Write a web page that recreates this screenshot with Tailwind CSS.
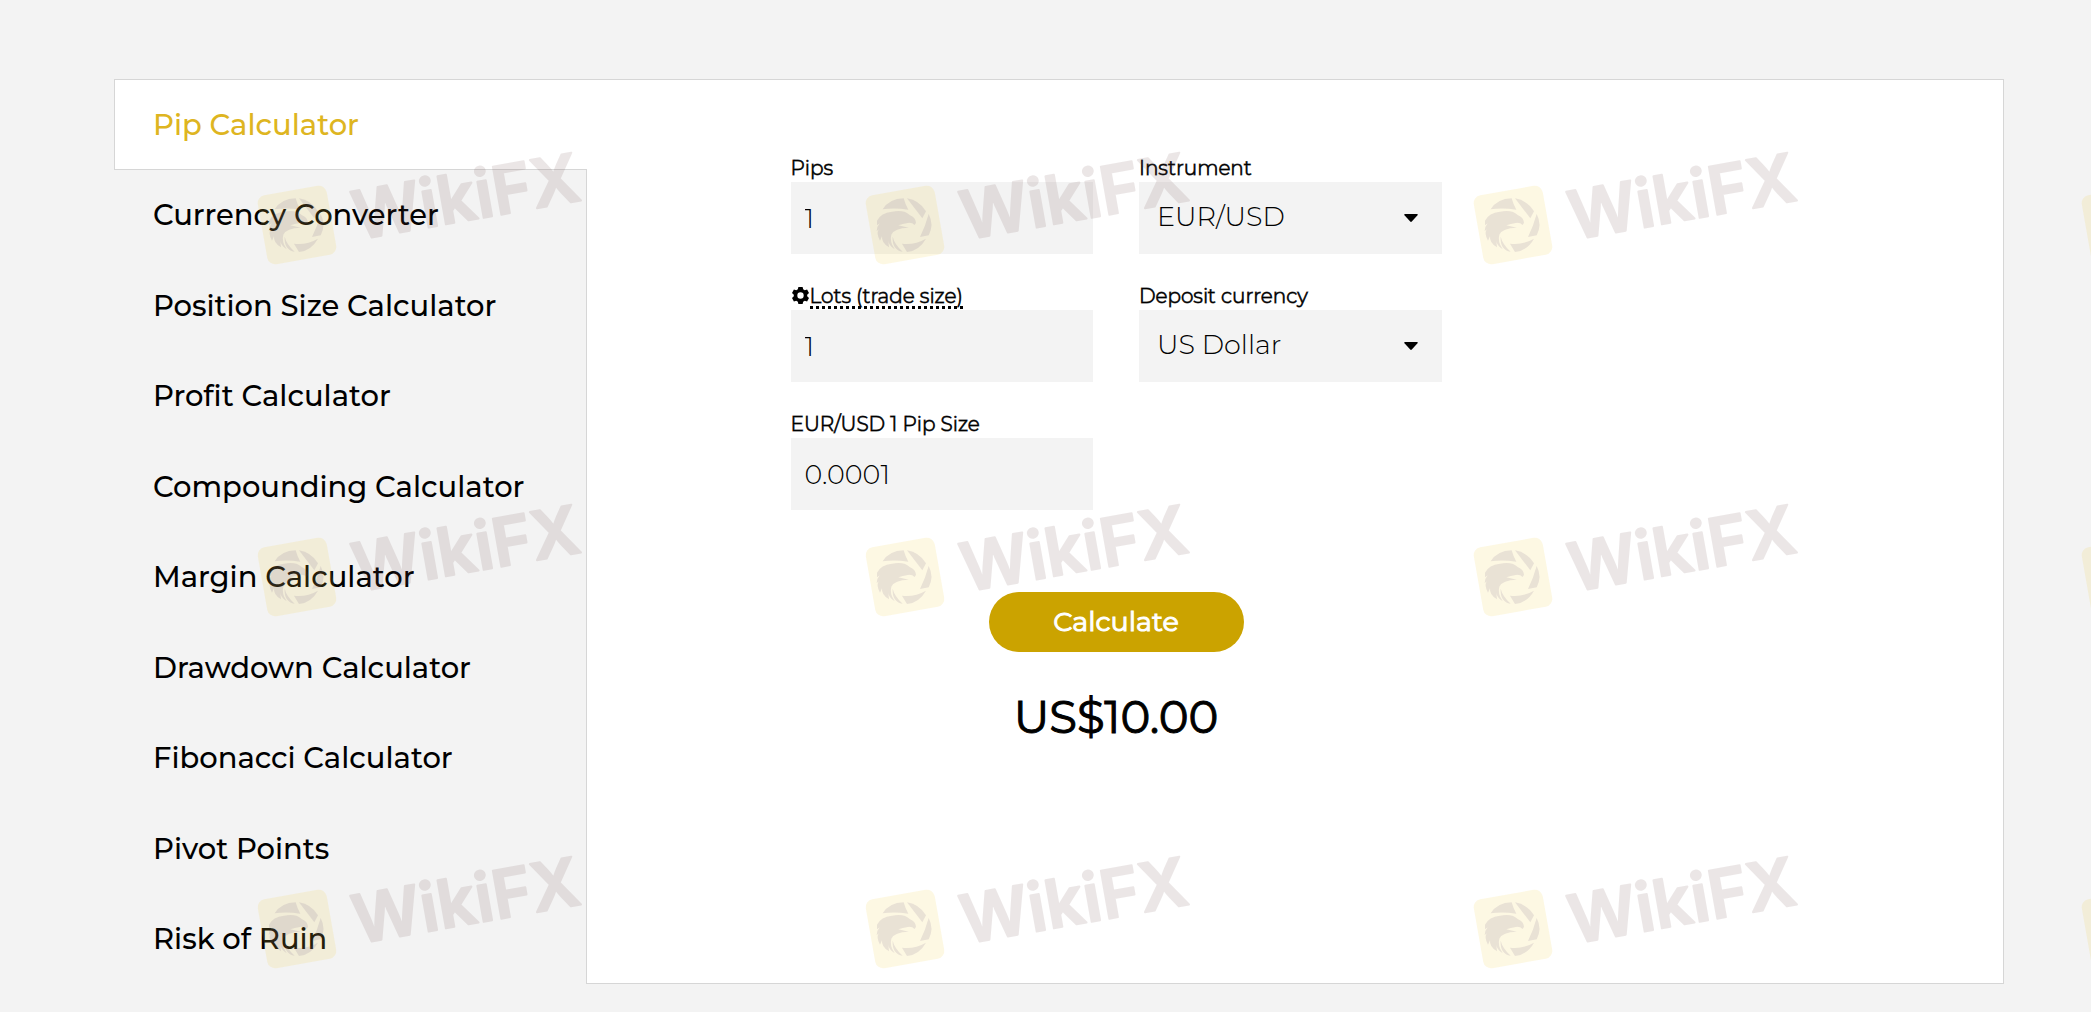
<!DOCTYPE html>
<html lang="en">
<head>
    <meta charset="UTF-8">
    <meta name="viewport" content="width=device-width, initial-scale=1.0">
    <title>Pip Calculator</title>
    <script src="https://cdn.jsdelivr.net/npm/@tailwindcss/browser@4"></script>
</head>
<body class="relative min-h-screen overflow-x-hidden bg-[#f3f3f3] font-[Montserrat,Inter,sans-serif] text-black">

<div class="flex min-h-[984px] pt-[79px] pr-[87px] pl-[114px]">
    <!-- Sidebar -->
    <nav class="z-10 -mr-px grid w-1/4 shrink-0 auto-rows-fr text-[29px] font-medium">
        <a href="#pip" class="flex items-center border border-r-0 border-[#d6d6d6] bg-white pl-[38px] text-[#deb521]">Pip Calculator</a>
        <a href="#converter" class="flex items-center border-r border-[#d6d6d6] pl-[39px]">Currency Converter</a>
        <a href="#position" class="flex items-center border-r border-[#d6d6d6] pl-[39px]">Position Size Calculator</a>
        <a href="#profit" class="flex items-center border-r border-[#d6d6d6] pl-[39px]">Profit Calculator</a>
        <a href="#compounding" class="flex items-center border-r border-[#d6d6d6] pl-[39px]">Compounding Calculator</a>
        <a href="#margin" class="flex items-center border-r border-[#d6d6d6] pl-[39px]">Margin Calculator</a>
        <a href="#drawdown" class="flex items-center border-r border-[#d6d6d6] pl-[39px]">Drawdown Calculator</a>
        <a href="#fibonacci" class="flex items-center border-r border-[#d6d6d6] pl-[39px]">Fibonacci Calculator</a>
        <a href="#pivot" class="flex items-center border-r border-[#d6d6d6] pl-[39px]">Pivot Points</a>
        <a href="#ruin" class="flex items-center border-r border-[#d6d6d6] pl-[39px]">Risk of Ruin</a>
    </nav>

    <!-- Calculator -->
    <main class="grow border border-l-0 border-[#d6d6d6] bg-white pt-[76px] pl-[205px]">
        <form class="max-w-[651px]" onsubmit="return false">
            <div class="grid grid-cols-2 gap-x-[46px] gap-y-[30px]">
                <div>
                    <label for="pips" class="flex h-[26px] items-start text-[20px] leading-6 font-light [-webkit-text-stroke:1px_#000b]">Pips</label>
                    <input id="pips" type="text" value="1" class="block h-[72px] w-full bg-[#f3f3f3] px-[14px] text-[27px] font-light">
                </div>
                <div>
                    <label for="instrument" class="flex h-[26px] items-start text-[20px] leading-6 font-light [-webkit-text-stroke:1px_#000b]">Instrument</label>
                    <div class="relative">
                        <select id="instrument" class="block h-[72px] w-full appearance-none bg-[#f3f3f3] px-[18px] pb-[2px] text-[27px] font-light">
                            <option>EUR/USD</option>
                        </select>
                        <svg class="pointer-events-none absolute top-8 right-6 h-2 w-[14px]" viewBox="0 0 14 8"><path d="M1 0H13Q14.500 0 13.500 1.200L7.800 7.500Q7 8.300 6.200 7.500L.5 1.200Q-.5 0 1 0Z"/></svg>
                    </div>
                </div>
                <div>
                    <label for="lots" class="flex h-[26px] items-start text-[20px] leading-6 font-light [-webkit-text-stroke:1px_#000b]">
                        <svg class="mx-px mt-[3px] h-[17px] w-[17px]" viewBox="0 0 16 16"><path stroke="none" fill-rule="evenodd" d="M6 0H10L10.500 2.200L12 3.100L14.200 2.400L16 5.600L14.300 7.200V8.800L16 10.400L14.200 13.600L12 12.900L10.500 13.800L10 16H6L5.500 13.800L4 12.900L1.800 13.600L0 10.400L1.700 8.800V7.200L0 5.600L1.800 2.400L4 3.100L5.500 2.200ZM8 5A3 3 0 1 0 8 11A3 3 0 1 0 8 5Z"/></svg>
                        <span class="h-[25px] border-b-3 border-dotted border-black">Lots (trade size)</span>
                    </label>
                    <input id="lots" type="text" value="1" class="block h-[72px] w-full bg-[#f3f3f3] px-[14px] text-[27px] font-light">
                </div>
                <div>
                    <label for="deposit" class="flex h-[26px] items-start text-[20px] leading-6 font-light [-webkit-text-stroke:1px_#000b]">Deposit currency</label>
                    <div class="relative">
                        <select id="deposit" class="block h-[72px] w-full appearance-none bg-[#f3f3f3] px-[18px] pb-[2px] text-[27px] font-light">
                            <option>US Dollar</option>
                        </select>
                        <svg class="pointer-events-none absolute top-8 right-6 h-2 w-[14px]" viewBox="0 0 14 8"><path d="M1 0H13Q14.500 0 13.500 1.200L7.800 7.500Q7 8.300 6.200 7.500L.5 1.200Q-.5 0 1 0Z"/></svg>
                    </div>
                </div>
                <div>
                    <label for="pip-size" class="flex h-[26px] items-start text-[20px] leading-6 font-light [-webkit-text-stroke:1px_#000b]">EUR/USD 1 Pip Size</label>
                    <input id="pip-size" type="text" value="0.0001" class="block h-[72px] w-full bg-[#f3f3f3] px-[14px] text-[27px] font-light">
                </div>
            </div>
            <button type="submit" class="mx-auto mt-[82px] block h-[60px] w-[255px] rounded-full bg-[#cba300] text-[27px] font-normal text-white [-webkit-text-stroke:1px]">Calculate</button>
            <output class="mt-[38px] block text-center text-[45px] leading-[54px] font-normal [-webkit-text-stroke:1px]">US$10.00</output>
        </form>
    </main>
</div>

<!-- Watermark -->
<svg class="pointer-events-none absolute inset-0 z-20 h-full w-full fill-[#6e4a4a] font-[Inter,sans-serif] text-[67px] font-semibold" aria-hidden="true">
    <defs>
        <g id="mark">
            <rect x="-35" y="-35" width="70" height="70" rx="8" transform="rotate(-10)" fill="#f0d040" fill-opacity=".15"/>
            <g transform="scale(.3333) translate(-197 -291)" fill="#64507a" fill-opacity=".13">
                <path d="M130 244Q150 212 193 211Q198 230 207 245Q165 238 130 244Z"/>
                <path d="M203 211Q240 217 260 250L249 271Z"/>
                <path d="M268 258Q285 290 268 322L242 327Q258 295 268 258Z"/>
                <path d="M188 347Q225 352 260 332Q240 368 203 372Z"/>
                <path d="M113 278Q125 254 158 251Q195 244 212 262Q228 268 230 284L226 291Q218 283 205 285Q190 287 177 292L208 299Q165 300 156 320Q150 340 166 364Q148 352 147 338L149 358Q126 345 128 325L122 338Q110 318 118 304L112 310Q112 296 121 286L113 292ZM175 265L198 274Q180 276 175 265Z"/>
                <path d="M160 326Q166 350 190 371Q158 366 160 326Z"/>
            </g>
            <text transform="translate(60 15) rotate(-10)" opacity=".13" stroke="#6e4a4a" stroke-width="2" stroke-linejoin="round">WikiFX</text>
        </g>
    </defs>
    <use href="#mark" x="297" y="225"/>
    <use href="#mark" x="905" y="225"/>
    <use href="#mark" x="1513" y="225"/>
    <use href="#mark" x="2121" y="225"/>
    <use href="#mark" x="297" y="577"/>
    <use href="#mark" x="905" y="577"/>
    <use href="#mark" x="1513" y="577"/>
    <use href="#mark" x="2121" y="577"/>
    <use href="#mark" x="297" y="929"/>
    <use href="#mark" x="905" y="929"/>
    <use href="#mark" x="1513" y="929"/>
    <use href="#mark" x="2121" y="929"/>
</svg>
</body>
</html>
